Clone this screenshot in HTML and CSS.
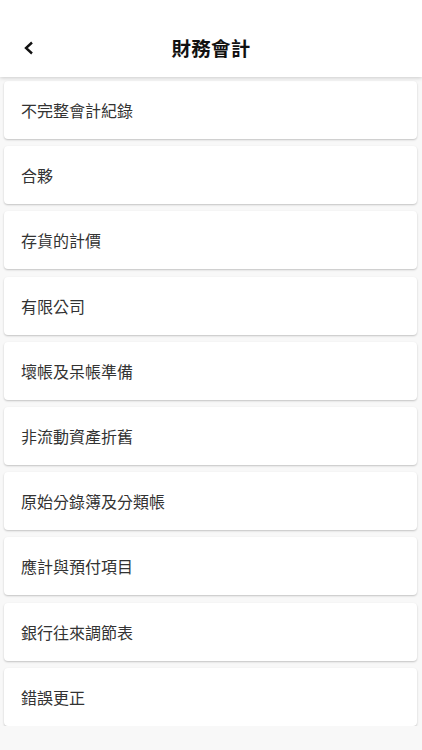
FILE: index.html
```html
<!DOCTYPE html>
<html lang="zh-Hant">
<head>
<meta charset="utf-8">
<link rel="stylesheet" href="styles.css">
</head>
<body>
<header class="topbar">
  <div class="back">
    <svg width="12" height="14" viewBox="0 0 12 14"><path d="M9 1.5 L3 7 L9 12.5" fill="none" stroke="#111" stroke-width="2.4" stroke-linejoin="miter"/></svg>
  </div>
  <h1 class="title">財務會計</h1>
</header>
<main class="list">
  <div class="card">不完整會計紀錄</div>
  <div class="card">合夥</div>
  <div class="card">存貨的計價</div>
  <div class="card">有限公司</div>
  <div class="card">壞帳及呆帳準備</div>
  <div class="card">非流動資產折舊</div>
  <div class="card">原始分錄簿及分類帳</div>
  <div class="card">應計與預付項目</div>
  <div class="card">銀行往來調節表</div>
  <div class="card">錯誤更正</div>
</main>
</body>
</html>
```
FILE: styles.css
```css
html, body {
  margin: 0;
  padding: 0;
  background: #f8f8f8;
  font-family: "Noto Sans CJK TC", "Noto Sans", sans-serif;
}
.topbar {
  position: relative;
  height: 77px;
  background: #fff;
  box-shadow: 0 1px 4px rgba(0,0,0,0.18);
  display: flex;
  align-items: center;
  justify-content: center;
  z-index: 2;
}
.back {
  position: absolute;
  left: 23px;
  top: 41px;
  width: 12px;
  height: 14px;
  display: flex;
}
.title {
  margin: 0;
  padding-top: 18px;
  font-size: 19.5px;
  font-weight: 700;
  color: #111;
  letter-spacing: 0.3px;
}
.list {
  display: flex;
  flex-direction: column;
  gap: 7.2px;
  padding: 4px 5px 0 4px;
}
.card {
  height: 58px;
  background: #fff;
  border-radius: 4px;
  box-shadow: 0 1px 2px rgba(0,0,0,0.22);
  display: flex;
  align-items: center;
  padding-left: 17px;
  font-size: 16px;
  color: #333;
}
```
